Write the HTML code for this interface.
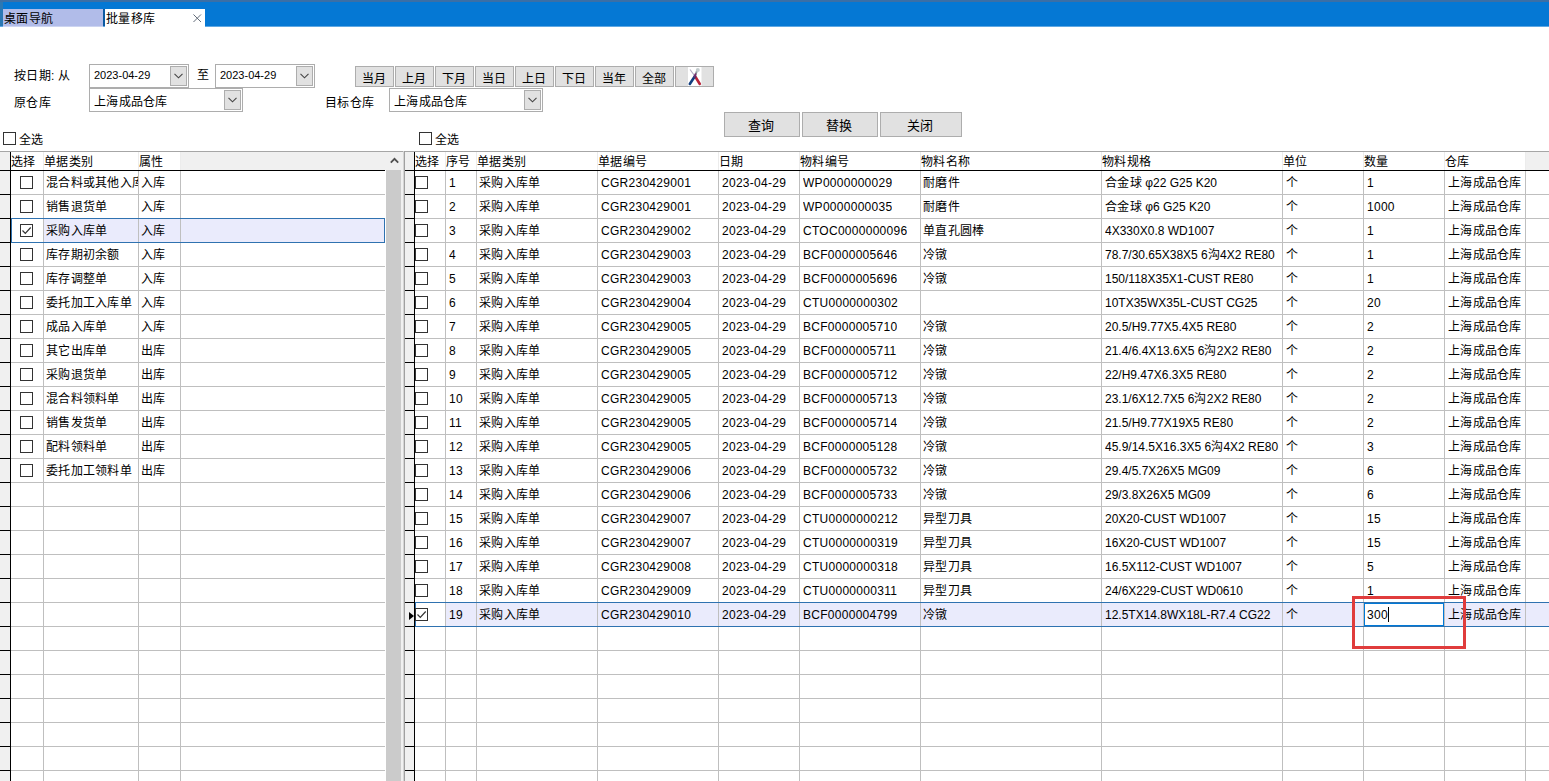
<!DOCTYPE html>
<html lang="zh-CN"><head><meta charset="utf-8"><title>批量移库</title>
<style>
*{box-sizing:border-box;margin:0;padding:0}
html,body{width:1549px;height:781px;overflow:hidden;background:#fff}
body{position:relative;font-family:"Liberation Sans",sans-serif;font-size:12px;color:#000}
.abs,.abs>*{position:absolute}
div{position:absolute;white-space:nowrap}
.a{letter-spacing:.28px}
.c{letter-spacing:.3px}
.n{letter-spacing:0}
.lbl{font-size:12px;line-height:14px;height:14px;letter-spacing:.3px}
.box{border:1px solid #adadad;background:#fff}
.dd{background:#e1e1e1;border:1px solid #adadad}
.btn{background:#e1e1e1;border:1px solid #adadad;text-align:center;font-size:12px}
.cb{width:13px;height:13px;border:1px solid #333;background:#fff}
.hl{background:#bfbfbf;height:1px}
.vl{background:#bfbfbf;width:1px}
.bl{background:#000}
.t{font-size:12px;line-height:25px;height:23px;overflow:hidden;letter-spacing:.28px}
.h{font-size:12px;line-height:20px;height:18px;overflow:hidden;letter-spacing:.3px}
.ind{background:#f0f0f0}
svg{position:absolute;overflow:visible}
</style></head><body>

<div style="left:0;top:0;width:1549px;height:26px;background:#0578d4"></div>
<div style="left:0;top:26px;width:1549px;height:1px;background:#5fa8e3"></div>
<div style="left:0;top:0;width:1549px;height:2px;background:#3b6fa6"></div>
<div style="left:0;top:2px;width:3px;height:24px;background:#2a78b4"></div>
<div style="left:3px;top:9px;width:100px;height:18px;background:linear-gradient(#b1bce9 0,#b1bce9 17px,#ccd4f1 17px);font-size:12px;line-height:20px;padding-left:1px;letter-spacing:.25px;overflow:hidden">桌面导航</div>
<div style="left:105px;top:9px;width:100px;height:18px;background:#fff;font-size:12px;line-height:20px;padding-left:1px;letter-spacing:.25px;overflow:hidden">批量移库</div>
<div style="left:103px;top:9px;width:2px;height:17px;background:#0a5aa2"></div>
<svg style="left:193px;top:13.5px" width="8.5" height="8.5" viewBox="0 0 9 9"><path d="M0.5 0.5L8.5 8.5M8.5 0.5L0.5 8.5" stroke="#5a6472" stroke-width="1" fill="none"/></svg>
<div class="lbl" style="left:14px;top:69px">按日期: 从</div>
<div class="lbl" style="left:14px;top:96px">原仓库</div>
<div class="lbl" style="left:197px;top:68px">至</div>
<div class="lbl" style="left:325px;top:96px">目标仓库</div>
<div class="box" style="left:89px;top:64px;width:100px;height:24px"></div>
<div style="left:94px;top:64px;height:24px;line-height:23px;font-size:11px">2023-04-29</div>
<div class="dd" style="left:170px;top:66px;width:17px;height:20px"></div>
<svg style="left:174px;top:73px" width="9" height="6" viewBox="0 0 9 6"><path d="M0.5 0.8L4.5 4.8L8.5 0.8" stroke="#444" stroke-width="1.1" fill="none"/></svg>
<div class="box" style="left:215px;top:64px;width:100px;height:24px"></div>
<div style="left:220px;top:64px;height:24px;line-height:23px;font-size:11px">2023-04-29</div>
<div class="dd" style="left:296px;top:66px;width:17px;height:20px"></div>
<svg style="left:300px;top:73px" width="9" height="6" viewBox="0 0 9 6"><path d="M0.5 0.8L4.5 4.8L8.5 0.8" stroke="#444" stroke-width="1.1" fill="none"/></svg>
<div class="box" style="left:89px;top:88px;width:154px;height:24px"></div>
<div style="left:94px;top:88px;height:24px;line-height:29px;font-size:12px;letter-spacing:.3px;overflow:hidden">上海成品仓库</div>
<div class="dd" style="left:224px;top:90px;width:17px;height:20px"></div>
<svg style="left:228px;top:97px" width="9" height="6" viewBox="0 0 9 6"><path d="M0.5 0.8L4.5 4.8L8.5 0.8" stroke="#444" stroke-width="1.1" fill="none"/></svg>
<div class="box" style="left:389px;top:88px;width:154px;height:24px"></div>
<div style="left:394px;top:88px;height:24px;line-height:29px;font-size:12px;letter-spacing:.3px;overflow:hidden">上海成品仓库</div>
<div class="dd" style="left:524px;top:90px;width:17px;height:20px"></div>
<svg style="left:528px;top:97px" width="9" height="6" viewBox="0 0 9 6"><path d="M0.5 0.8L4.5 4.8L8.5 0.8" stroke="#444" stroke-width="1.1" fill="none"/></svg>
<div class="btn" style="left:355px;top:66px;width:39px;height:21px;line-height:24px;letter-spacing:.3px;overflow:hidden">当月</div>
<div class="btn" style="left:395px;top:66px;width:39px;height:21px;line-height:24px;letter-spacing:.3px;overflow:hidden">上月</div>
<div class="btn" style="left:435px;top:66px;width:39px;height:21px;line-height:24px;letter-spacing:.3px;overflow:hidden">下月</div>
<div class="btn" style="left:475px;top:66px;width:39px;height:21px;line-height:24px;letter-spacing:.3px;overflow:hidden">当日</div>
<div class="btn" style="left:515px;top:66px;width:39px;height:21px;line-height:24px;letter-spacing:.3px;overflow:hidden">上日</div>
<div class="btn" style="left:555px;top:66px;width:39px;height:21px;line-height:24px;letter-spacing:.3px;overflow:hidden">下日</div>
<div class="btn" style="left:595px;top:66px;width:39px;height:21px;line-height:24px;letter-spacing:.3px;overflow:hidden">当年</div>
<div class="btn" style="left:635px;top:66px;width:39px;height:21px;line-height:24px;letter-spacing:.3px;overflow:hidden">全部</div>
<div class="btn" style="left:675px;top:66px;width:39px;height:21px;line-height:24px;letter-spacing:.3px;overflow:hidden"></div>
<svg style="left:688px;top:67px" width="14" height="19" viewBox="0 0 14 19">
<rect x="0" y="0" width="13.5" height="19" fill="#fff"/>
<path d="M2 2.5L7.5 10" stroke="#b0a8c0" stroke-width="1.1" fill="none"/>
<path d="M7.2 9.5L11.8 17" stroke="#b8243a" stroke-width="2.6" stroke-linecap="round" fill="none"/>
<path d="M9.5 2.5L7.2 8.5" stroke="#8c9aa0" stroke-width="2" fill="none"/>
<circle cx="9.8" cy="3" r="2" fill="#c4ccce"/>
<path d="M7 9L1.8 17" stroke="#123f80" stroke-width="2.6" stroke-linecap="round" fill="none"/>
<path d="M7.8 6.5L6.2 10.5" stroke="#7a2a6a" stroke-width="1.8" fill="none"/>
</svg>
<div class="btn" style="left:724px;top:112px;width:76px;height:25px;line-height:25px;font-size:13px;padding-right:2px">查询</div>
<div class="btn" style="left:802px;top:112px;width:76px;height:25px;line-height:25px;font-size:13px;padding-right:2px">替换</div>
<div class="btn" style="left:880px;top:112px;width:82px;height:25px;line-height:25px;font-size:13px;padding-right:2px">关闭</div>
<div class="cb" style="left:3px;top:132px"></div>
<div class="lbl" style="left:19px;top:133px">全选</div>
<div class="cb" style="left:419px;top:132px"></div>
<div class="lbl" style="left:435px;top:133px">全选</div>
<div style="left:0;top:151px;width:1549px;height:1px;background:#a6a6a6"></div>
<div class="ind" style="left:0;top:152px;width:10px;height:629px"></div>
<div style="left:11px;top:152px;width:170px;height:18px;background:#fff"></div>
<div style="left:181px;top:152px;width:205px;height:18px;background:#f0f0f0"></div>
<div class="h" style="left:11px;top:152px">选择</div>
<div class="h" style="left:44px;top:152px">单据类别</div>
<div class="h" style="left:139px;top:152px">属性</div>
<div style="left:43px;top:152px;width:1px;height:18px;background:#ececec"></div>
<div style="left:138px;top:152px;width:1px;height:18px;background:#ececec"></div>
<div style="left:180px;top:152px;width:1px;height:18px;background:#ececec"></div>
<div class="hl" style="left:11px;top:194px;width:374px"></div>
<div class="bl" style="left:0;top:194px;width:10px;height:1px"></div>
<div class="hl" style="left:11px;top:218px;width:374px"></div>
<div class="bl" style="left:0;top:218px;width:10px;height:1px"></div>
<div class="hl" style="left:11px;top:242px;width:374px"></div>
<div class="bl" style="left:0;top:242px;width:10px;height:1px"></div>
<div class="hl" style="left:11px;top:266px;width:374px"></div>
<div class="bl" style="left:0;top:266px;width:10px;height:1px"></div>
<div class="hl" style="left:11px;top:290px;width:374px"></div>
<div class="bl" style="left:0;top:290px;width:10px;height:1px"></div>
<div class="hl" style="left:11px;top:314px;width:374px"></div>
<div class="bl" style="left:0;top:314px;width:10px;height:1px"></div>
<div class="hl" style="left:11px;top:338px;width:374px"></div>
<div class="bl" style="left:0;top:338px;width:10px;height:1px"></div>
<div class="hl" style="left:11px;top:362px;width:374px"></div>
<div class="bl" style="left:0;top:362px;width:10px;height:1px"></div>
<div class="hl" style="left:11px;top:386px;width:374px"></div>
<div class="bl" style="left:0;top:386px;width:10px;height:1px"></div>
<div class="hl" style="left:11px;top:410px;width:374px"></div>
<div class="bl" style="left:0;top:410px;width:10px;height:1px"></div>
<div class="hl" style="left:11px;top:434px;width:374px"></div>
<div class="bl" style="left:0;top:434px;width:10px;height:1px"></div>
<div class="hl" style="left:11px;top:458px;width:374px"></div>
<div class="bl" style="left:0;top:458px;width:10px;height:1px"></div>
<div class="hl" style="left:11px;top:482px;width:374px"></div>
<div class="bl" style="left:0;top:482px;width:10px;height:1px"></div>
<div class="hl" style="left:11px;top:506px;width:374px"></div>
<div class="bl" style="left:0;top:506px;width:10px;height:1px"></div>
<div class="hl" style="left:11px;top:530px;width:374px"></div>
<div class="bl" style="left:0;top:530px;width:10px;height:1px"></div>
<div class="hl" style="left:11px;top:554px;width:374px"></div>
<div class="bl" style="left:0;top:554px;width:10px;height:1px"></div>
<div class="hl" style="left:11px;top:578px;width:374px"></div>
<div class="bl" style="left:0;top:578px;width:10px;height:1px"></div>
<div class="hl" style="left:11px;top:602px;width:374px"></div>
<div class="bl" style="left:0;top:602px;width:10px;height:1px"></div>
<div class="hl" style="left:11px;top:626px;width:374px"></div>
<div class="bl" style="left:0;top:626px;width:10px;height:1px"></div>
<div class="hl" style="left:11px;top:650px;width:374px"></div>
<div class="bl" style="left:0;top:650px;width:10px;height:1px"></div>
<div class="hl" style="left:11px;top:674px;width:374px"></div>
<div class="bl" style="left:0;top:674px;width:10px;height:1px"></div>
<div class="hl" style="left:11px;top:698px;width:374px"></div>
<div class="bl" style="left:0;top:698px;width:10px;height:1px"></div>
<div class="hl" style="left:11px;top:722px;width:374px"></div>
<div class="bl" style="left:0;top:722px;width:10px;height:1px"></div>
<div class="hl" style="left:11px;top:746px;width:374px"></div>
<div class="bl" style="left:0;top:746px;width:10px;height:1px"></div>
<div class="hl" style="left:11px;top:770px;width:374px"></div>
<div class="bl" style="left:0;top:770px;width:10px;height:1px"></div>
<div class="vl" style="left:43px;top:171px;height:610px"></div>
<div class="vl" style="left:138px;top:171px;height:610px"></div>
<div class="vl" style="left:180px;top:171px;height:610px"></div>
<div style="left:44px;top:219px;width:341px;height:23px;background:#eaebfc"></div>
<div class="vl" style="left:138px;top:219px;height:23px"></div><div class="vl" style="left:180px;top:219px;height:23px"></div>
<div style="left:11px;top:218px;width:374px;height:25px;border:1px solid #2f72b0"></div>
<div class="cb" style="left:20px;top:176px"></div>
<div class="t" style="left:46px;top:171px;width:92px">混合料或其他入库单</div>
<div class="t" style="left:141px;top:171px">入库</div>
<div class="cb" style="left:20px;top:200px"></div>
<div class="t" style="left:46px;top:195px;width:92px">销售退货单</div>
<div class="t" style="left:141px;top:195px">入库</div>
<div class="cb" style="left:20px;top:224px"></div>
<div class="t" style="left:46px;top:219px;width:92px">采购入库单</div>
<div class="t" style="left:141px;top:219px">入库</div>
<div class="cb" style="left:20px;top:248px"></div>
<div class="t" style="left:46px;top:243px;width:92px">库存期初余额</div>
<div class="t" style="left:141px;top:243px">入库</div>
<div class="cb" style="left:20px;top:272px"></div>
<div class="t" style="left:46px;top:267px;width:92px">库存调整单</div>
<div class="t" style="left:141px;top:267px">入库</div>
<div class="cb" style="left:20px;top:296px"></div>
<div class="t" style="left:46px;top:291px;width:92px">委托加工入库单</div>
<div class="t" style="left:141px;top:291px">入库</div>
<div class="cb" style="left:20px;top:320px"></div>
<div class="t" style="left:46px;top:315px;width:92px">成品入库单</div>
<div class="t" style="left:141px;top:315px">入库</div>
<div class="cb" style="left:20px;top:344px"></div>
<div class="t" style="left:46px;top:339px;width:92px">其它出库单</div>
<div class="t" style="left:141px;top:339px">出库</div>
<div class="cb" style="left:20px;top:368px"></div>
<div class="t" style="left:46px;top:363px;width:92px">采购退货单</div>
<div class="t" style="left:141px;top:363px">出库</div>
<div class="cb" style="left:20px;top:392px"></div>
<div class="t" style="left:46px;top:387px;width:92px">混合料领料单</div>
<div class="t" style="left:141px;top:387px">出库</div>
<div class="cb" style="left:20px;top:416px"></div>
<div class="t" style="left:46px;top:411px;width:92px">销售发货单</div>
<div class="t" style="left:141px;top:411px">出库</div>
<div class="cb" style="left:20px;top:440px"></div>
<div class="t" style="left:46px;top:435px;width:92px">配料领料单</div>
<div class="t" style="left:141px;top:435px">出库</div>
<div class="cb" style="left:20px;top:464px"></div>
<div class="t" style="left:46px;top:459px;width:92px">委托加工领料单</div>
<div class="t" style="left:141px;top:459px">出库</div>
<svg style="left:21px;top:225px" width="11" height="11" viewBox="0 0 11 11"><path d="M1.5 5.5L4.3 8.3L9.7 2.5" stroke="#333" stroke-width="1.2" fill="none"/></svg>
<div class="bl" style="left:0;top:170px;width:385px;height:1px"></div>
<div class="bl" style="left:10px;top:152px;width:1px;height:629px"></div>
<div style="left:386px;top:152px;width:17px;height:18px;background:#f0f0f0"></div>
<div style="left:386px;top:170px;width:17px;height:611px;background:#f0f0f0"></div>
<div style="left:386px;top:170px;width:15px;height:611px;background:#cbcbcb"></div>
<svg style="left:390px;top:157px" width="9" height="7" viewBox="0 0 9 7"><path d="M0.8 5.6L4.5 1.8L8.2 5.6" stroke="#505050" stroke-width="1.8" fill="none"/></svg>
<div style="left:403px;top:151px;width:1px;height:630px;background:#d4d4d4"></div>
<div style="left:404px;top:151px;width:1px;height:630px;background:#a0a0a0"></div>
<div class="ind" style="left:405px;top:152px;width:9px;height:629px"></div>
<div style="left:1526px;top:152px;width:23px;height:18px;background:#f0f0f0"></div>
<div class="h" style="left:415px;top:152px">选择</div>
<div class="h" style="left:446px;top:152px">序号</div>
<div class="h" style="left:477px;top:152px">单据类别</div>
<div class="h" style="left:598px;top:152px">单据编号</div>
<div class="h" style="left:719px;top:152px">日期</div>
<div class="h" style="left:800px;top:152px">物料编号</div>
<div class="h" style="left:921px;top:152px">物料名称</div>
<div class="h" style="left:1102px;top:152px">物料规格</div>
<div class="h" style="left:1283px;top:152px">单位</div>
<div class="h" style="left:1364px;top:152px">数量</div>
<div class="h" style="left:1445px;top:152px">仓库</div>
<div style="left:445px;top:152px;width:1px;height:18px;background:#ececec"></div>
<div style="left:476px;top:152px;width:1px;height:18px;background:#ececec"></div>
<div style="left:597px;top:152px;width:1px;height:18px;background:#ececec"></div>
<div style="left:718px;top:152px;width:1px;height:18px;background:#ececec"></div>
<div style="left:799px;top:152px;width:1px;height:18px;background:#ececec"></div>
<div style="left:920px;top:152px;width:1px;height:18px;background:#ececec"></div>
<div style="left:1101px;top:152px;width:1px;height:18px;background:#ececec"></div>
<div style="left:1282px;top:152px;width:1px;height:18px;background:#ececec"></div>
<div style="left:1363px;top:152px;width:1px;height:18px;background:#ececec"></div>
<div style="left:1444px;top:152px;width:1px;height:18px;background:#ececec"></div>
<div style="left:1525px;top:152px;width:1px;height:18px;background:#ececec"></div>
<div class="hl" style="left:415px;top:194px;width:1134px"></div>
<div class="bl" style="left:405px;top:194px;width:9px;height:1px"></div>
<div class="hl" style="left:415px;top:218px;width:1134px"></div>
<div class="bl" style="left:405px;top:218px;width:9px;height:1px"></div>
<div class="hl" style="left:415px;top:242px;width:1134px"></div>
<div class="bl" style="left:405px;top:242px;width:9px;height:1px"></div>
<div class="hl" style="left:415px;top:266px;width:1134px"></div>
<div class="bl" style="left:405px;top:266px;width:9px;height:1px"></div>
<div class="hl" style="left:415px;top:290px;width:1134px"></div>
<div class="bl" style="left:405px;top:290px;width:9px;height:1px"></div>
<div class="hl" style="left:415px;top:314px;width:1134px"></div>
<div class="bl" style="left:405px;top:314px;width:9px;height:1px"></div>
<div class="hl" style="left:415px;top:338px;width:1134px"></div>
<div class="bl" style="left:405px;top:338px;width:9px;height:1px"></div>
<div class="hl" style="left:415px;top:362px;width:1134px"></div>
<div class="bl" style="left:405px;top:362px;width:9px;height:1px"></div>
<div class="hl" style="left:415px;top:386px;width:1134px"></div>
<div class="bl" style="left:405px;top:386px;width:9px;height:1px"></div>
<div class="hl" style="left:415px;top:410px;width:1134px"></div>
<div class="bl" style="left:405px;top:410px;width:9px;height:1px"></div>
<div class="hl" style="left:415px;top:434px;width:1134px"></div>
<div class="bl" style="left:405px;top:434px;width:9px;height:1px"></div>
<div class="hl" style="left:415px;top:458px;width:1134px"></div>
<div class="bl" style="left:405px;top:458px;width:9px;height:1px"></div>
<div class="hl" style="left:415px;top:482px;width:1134px"></div>
<div class="bl" style="left:405px;top:482px;width:9px;height:1px"></div>
<div class="hl" style="left:415px;top:506px;width:1134px"></div>
<div class="bl" style="left:405px;top:506px;width:9px;height:1px"></div>
<div class="hl" style="left:415px;top:530px;width:1134px"></div>
<div class="bl" style="left:405px;top:530px;width:9px;height:1px"></div>
<div class="hl" style="left:415px;top:554px;width:1134px"></div>
<div class="bl" style="left:405px;top:554px;width:9px;height:1px"></div>
<div class="hl" style="left:415px;top:578px;width:1134px"></div>
<div class="bl" style="left:405px;top:578px;width:9px;height:1px"></div>
<div class="hl" style="left:415px;top:602px;width:1134px"></div>
<div class="bl" style="left:405px;top:602px;width:9px;height:1px"></div>
<div class="hl" style="left:415px;top:626px;width:1134px"></div>
<div class="bl" style="left:405px;top:626px;width:9px;height:1px"></div>
<div class="hl" style="left:415px;top:650px;width:1134px"></div>
<div class="bl" style="left:405px;top:650px;width:9px;height:1px"></div>
<div class="hl" style="left:415px;top:674px;width:1134px"></div>
<div class="bl" style="left:405px;top:674px;width:9px;height:1px"></div>
<div class="hl" style="left:415px;top:698px;width:1134px"></div>
<div class="bl" style="left:405px;top:698px;width:9px;height:1px"></div>
<div class="hl" style="left:415px;top:722px;width:1134px"></div>
<div class="bl" style="left:405px;top:722px;width:9px;height:1px"></div>
<div class="hl" style="left:415px;top:746px;width:1134px"></div>
<div class="bl" style="left:405px;top:746px;width:9px;height:1px"></div>
<div class="hl" style="left:415px;top:770px;width:1134px"></div>
<div class="bl" style="left:405px;top:770px;width:9px;height:1px"></div>
<div class="vl" style="left:445px;top:171px;height:610px"></div>
<div class="vl" style="left:476px;top:171px;height:610px"></div>
<div class="vl" style="left:597px;top:171px;height:610px"></div>
<div class="vl" style="left:718px;top:171px;height:610px"></div>
<div class="vl" style="left:799px;top:171px;height:610px"></div>
<div class="vl" style="left:920px;top:171px;height:610px"></div>
<div class="vl" style="left:1101px;top:171px;height:610px"></div>
<div class="vl" style="left:1282px;top:171px;height:610px"></div>
<div class="vl" style="left:1363px;top:171px;height:610px"></div>
<div class="vl" style="left:1444px;top:171px;height:610px"></div>
<div class="vl" style="left:1525px;top:171px;height:610px"></div>
<div style="left:446px;top:603px;width:1103px;height:23px;background:#eaebfc"></div>
<div class="vl" style="left:476px;top:603px;height:23px"></div>
<div class="vl" style="left:597px;top:603px;height:23px"></div>
<div class="vl" style="left:718px;top:603px;height:23px"></div>
<div class="vl" style="left:799px;top:603px;height:23px"></div>
<div class="vl" style="left:920px;top:603px;height:23px"></div>
<div class="vl" style="left:1101px;top:603px;height:23px"></div>
<div class="vl" style="left:1282px;top:603px;height:23px"></div>
<div class="vl" style="left:1363px;top:603px;height:23px"></div>
<div class="vl" style="left:1444px;top:603px;height:23px"></div>
<div class="vl" style="left:1525px;top:603px;height:23px"></div>
<div style="left:415px;top:602px;width:1140px;height:25px;border:1px solid #2f72b0"></div>
<div class="cb" style="left:415px;top:176px"></div>
<div class="t a" style="left:449px;top:171px">1</div>
<div class="t" style="left:479px;top:171px">采购入库单</div>
<div class="t a" style="left:601px;top:171px">CGR230429001</div>
<div class="t a" style="left:722px;top:171px">2023-04-29</div>
<div class="t a" style="left:803px;top:171px">WP0000000029</div>
<div class="t" style="left:923px;top:171px">耐磨件</div>
<div class="t" style="left:1105px;top:171px;width:177px">合金球<span class="n"> φ22 G25 K20</span></div>
<div class="t" style="left:1286px;top:171px">个</div>
<div class="t a" style="left:1367px;top:171px">1</div>
<div class="t" style="left:1448px;top:171px">上海成品仓库</div>
<div class="cb" style="left:415px;top:200px"></div>
<div class="t a" style="left:449px;top:195px">2</div>
<div class="t" style="left:479px;top:195px">采购入库单</div>
<div class="t a" style="left:601px;top:195px">CGR230429001</div>
<div class="t a" style="left:722px;top:195px">2023-04-29</div>
<div class="t a" style="left:803px;top:195px">WP0000000035</div>
<div class="t" style="left:923px;top:195px">耐磨件</div>
<div class="t" style="left:1105px;top:195px;width:177px">合金球<span class="n"> φ6 G25 K20</span></div>
<div class="t" style="left:1286px;top:195px">个</div>
<div class="t a" style="left:1367px;top:195px">1000</div>
<div class="t" style="left:1448px;top:195px">上海成品仓库</div>
<div class="cb" style="left:415px;top:224px"></div>
<div class="t a" style="left:449px;top:219px">3</div>
<div class="t" style="left:479px;top:219px">采购入库单</div>
<div class="t a" style="left:601px;top:219px">CGR230429002</div>
<div class="t a" style="left:722px;top:219px">2023-04-29</div>
<div class="t a" style="left:803px;top:219px">CTOC0000000096</div>
<div class="t" style="left:923px;top:219px">单直孔圆棒</div>
<div class="t" style="left:1105px;top:219px;width:177px"><span class="n">4X330X0.8 WD1007</span></div>
<div class="t" style="left:1286px;top:219px">个</div>
<div class="t a" style="left:1367px;top:219px">1</div>
<div class="t" style="left:1448px;top:219px">上海成品仓库</div>
<div class="cb" style="left:415px;top:248px"></div>
<div class="t a" style="left:449px;top:243px">4</div>
<div class="t" style="left:479px;top:243px">采购入库单</div>
<div class="t a" style="left:601px;top:243px">CGR230429003</div>
<div class="t a" style="left:722px;top:243px">2023-04-29</div>
<div class="t a" style="left:803px;top:243px">BCF0000005646</div>
<div class="t" style="left:923px;top:243px">冷镦</div>
<div class="t" style="left:1105px;top:243px;width:177px"><span class="n">78.7/30.65X38X5 6</span>沟<span class="n">4X2 RE80</span></div>
<div class="t" style="left:1286px;top:243px">个</div>
<div class="t a" style="left:1367px;top:243px">1</div>
<div class="t" style="left:1448px;top:243px">上海成品仓库</div>
<div class="cb" style="left:415px;top:272px"></div>
<div class="t a" style="left:449px;top:267px">5</div>
<div class="t" style="left:479px;top:267px">采购入库单</div>
<div class="t a" style="left:601px;top:267px">CGR230429003</div>
<div class="t a" style="left:722px;top:267px">2023-04-29</div>
<div class="t a" style="left:803px;top:267px">BCF0000005696</div>
<div class="t" style="left:923px;top:267px">冷镦</div>
<div class="t" style="left:1105px;top:267px;width:177px"><span class="n">150/118X35X1-CUST RE80</span></div>
<div class="t" style="left:1286px;top:267px">个</div>
<div class="t a" style="left:1367px;top:267px">1</div>
<div class="t" style="left:1448px;top:267px">上海成品仓库</div>
<div class="cb" style="left:415px;top:296px"></div>
<div class="t a" style="left:449px;top:291px">6</div>
<div class="t" style="left:479px;top:291px">采购入库单</div>
<div class="t a" style="left:601px;top:291px">CGR230429004</div>
<div class="t a" style="left:722px;top:291px">2023-04-29</div>
<div class="t a" style="left:803px;top:291px">CTU0000000302</div>
<div class="t" style="left:1105px;top:291px;width:177px"><span class="n">10TX35WX35L-CUST CG25</span></div>
<div class="t" style="left:1286px;top:291px">个</div>
<div class="t a" style="left:1367px;top:291px">20</div>
<div class="t" style="left:1448px;top:291px">上海成品仓库</div>
<div class="cb" style="left:415px;top:320px"></div>
<div class="t a" style="left:449px;top:315px">7</div>
<div class="t" style="left:479px;top:315px">采购入库单</div>
<div class="t a" style="left:601px;top:315px">CGR230429005</div>
<div class="t a" style="left:722px;top:315px">2023-04-29</div>
<div class="t a" style="left:803px;top:315px">BCF0000005710</div>
<div class="t" style="left:923px;top:315px">冷镦</div>
<div class="t" style="left:1105px;top:315px;width:177px"><span class="n">20.5/H9.77X5.4X5 RE80</span></div>
<div class="t" style="left:1286px;top:315px">个</div>
<div class="t a" style="left:1367px;top:315px">2</div>
<div class="t" style="left:1448px;top:315px">上海成品仓库</div>
<div class="cb" style="left:415px;top:344px"></div>
<div class="t a" style="left:449px;top:339px">8</div>
<div class="t" style="left:479px;top:339px">采购入库单</div>
<div class="t a" style="left:601px;top:339px">CGR230429005</div>
<div class="t a" style="left:722px;top:339px">2023-04-29</div>
<div class="t a" style="left:803px;top:339px">BCF0000005711</div>
<div class="t" style="left:923px;top:339px">冷镦</div>
<div class="t" style="left:1105px;top:339px;width:177px"><span class="n">21.4/6.4X13.6X5 6</span>沟<span class="n">2X2 RE80</span></div>
<div class="t" style="left:1286px;top:339px">个</div>
<div class="t a" style="left:1367px;top:339px">2</div>
<div class="t" style="left:1448px;top:339px">上海成品仓库</div>
<div class="cb" style="left:415px;top:368px"></div>
<div class="t a" style="left:449px;top:363px">9</div>
<div class="t" style="left:479px;top:363px">采购入库单</div>
<div class="t a" style="left:601px;top:363px">CGR230429005</div>
<div class="t a" style="left:722px;top:363px">2023-04-29</div>
<div class="t a" style="left:803px;top:363px">BCF0000005712</div>
<div class="t" style="left:923px;top:363px">冷镦</div>
<div class="t" style="left:1105px;top:363px;width:177px"><span class="n">22/H9.47X6.3X5 RE80</span></div>
<div class="t" style="left:1286px;top:363px">个</div>
<div class="t a" style="left:1367px;top:363px">2</div>
<div class="t" style="left:1448px;top:363px">上海成品仓库</div>
<div class="cb" style="left:415px;top:392px"></div>
<div class="t a" style="left:449px;top:387px">10</div>
<div class="t" style="left:479px;top:387px">采购入库单</div>
<div class="t a" style="left:601px;top:387px">CGR230429005</div>
<div class="t a" style="left:722px;top:387px">2023-04-29</div>
<div class="t a" style="left:803px;top:387px">BCF0000005713</div>
<div class="t" style="left:923px;top:387px">冷镦</div>
<div class="t" style="left:1105px;top:387px;width:177px"><span class="n">23.1/6X12.7X5 6</span>沟<span class="n">2X2 RE80</span></div>
<div class="t" style="left:1286px;top:387px">个</div>
<div class="t a" style="left:1367px;top:387px">2</div>
<div class="t" style="left:1448px;top:387px">上海成品仓库</div>
<div class="cb" style="left:415px;top:416px"></div>
<div class="t a" style="left:449px;top:411px">11</div>
<div class="t" style="left:479px;top:411px">采购入库单</div>
<div class="t a" style="left:601px;top:411px">CGR230429005</div>
<div class="t a" style="left:722px;top:411px">2023-04-29</div>
<div class="t a" style="left:803px;top:411px">BCF0000005714</div>
<div class="t" style="left:923px;top:411px">冷镦</div>
<div class="t" style="left:1105px;top:411px;width:177px"><span class="n">21.5/H9.77X19X5 RE80</span></div>
<div class="t" style="left:1286px;top:411px">个</div>
<div class="t a" style="left:1367px;top:411px">2</div>
<div class="t" style="left:1448px;top:411px">上海成品仓库</div>
<div class="cb" style="left:415px;top:440px"></div>
<div class="t a" style="left:449px;top:435px">12</div>
<div class="t" style="left:479px;top:435px">采购入库单</div>
<div class="t a" style="left:601px;top:435px">CGR230429005</div>
<div class="t a" style="left:722px;top:435px">2023-04-29</div>
<div class="t a" style="left:803px;top:435px">BCF0000005128</div>
<div class="t" style="left:923px;top:435px">冷镦</div>
<div class="t" style="left:1105px;top:435px;width:177px"><span class="n">45.9/14.5X16.3X5 6</span>沟<span class="n">4X2 RE80</span></div>
<div class="t" style="left:1286px;top:435px">个</div>
<div class="t a" style="left:1367px;top:435px">3</div>
<div class="t" style="left:1448px;top:435px">上海成品仓库</div>
<div class="cb" style="left:415px;top:464px"></div>
<div class="t a" style="left:449px;top:459px">13</div>
<div class="t" style="left:479px;top:459px">采购入库单</div>
<div class="t a" style="left:601px;top:459px">CGR230429006</div>
<div class="t a" style="left:722px;top:459px">2023-04-29</div>
<div class="t a" style="left:803px;top:459px">BCF0000005732</div>
<div class="t" style="left:923px;top:459px">冷镦</div>
<div class="t" style="left:1105px;top:459px;width:177px"><span class="n">29.4/5.7X26X5 MG09</span></div>
<div class="t" style="left:1286px;top:459px">个</div>
<div class="t a" style="left:1367px;top:459px">6</div>
<div class="t" style="left:1448px;top:459px">上海成品仓库</div>
<div class="cb" style="left:415px;top:488px"></div>
<div class="t a" style="left:449px;top:483px">14</div>
<div class="t" style="left:479px;top:483px">采购入库单</div>
<div class="t a" style="left:601px;top:483px">CGR230429006</div>
<div class="t a" style="left:722px;top:483px">2023-04-29</div>
<div class="t a" style="left:803px;top:483px">BCF0000005733</div>
<div class="t" style="left:923px;top:483px">冷镦</div>
<div class="t" style="left:1105px;top:483px;width:177px"><span class="n">29/3.8X26X5 MG09</span></div>
<div class="t" style="left:1286px;top:483px">个</div>
<div class="t a" style="left:1367px;top:483px">6</div>
<div class="t" style="left:1448px;top:483px">上海成品仓库</div>
<div class="cb" style="left:415px;top:512px"></div>
<div class="t a" style="left:449px;top:507px">15</div>
<div class="t" style="left:479px;top:507px">采购入库单</div>
<div class="t a" style="left:601px;top:507px">CGR230429007</div>
<div class="t a" style="left:722px;top:507px">2023-04-29</div>
<div class="t a" style="left:803px;top:507px">CTU0000000212</div>
<div class="t" style="left:923px;top:507px">异型刀具</div>
<div class="t" style="left:1105px;top:507px;width:177px"><span class="n">20X20-CUST WD1007</span></div>
<div class="t" style="left:1286px;top:507px">个</div>
<div class="t a" style="left:1367px;top:507px">15</div>
<div class="t" style="left:1448px;top:507px">上海成品仓库</div>
<div class="cb" style="left:415px;top:536px"></div>
<div class="t a" style="left:449px;top:531px">16</div>
<div class="t" style="left:479px;top:531px">采购入库单</div>
<div class="t a" style="left:601px;top:531px">CGR230429007</div>
<div class="t a" style="left:722px;top:531px">2023-04-29</div>
<div class="t a" style="left:803px;top:531px">CTU0000000319</div>
<div class="t" style="left:923px;top:531px">异型刀具</div>
<div class="t" style="left:1105px;top:531px;width:177px"><span class="n">16X20-CUST WD1007</span></div>
<div class="t" style="left:1286px;top:531px">个</div>
<div class="t a" style="left:1367px;top:531px">15</div>
<div class="t" style="left:1448px;top:531px">上海成品仓库</div>
<div class="cb" style="left:415px;top:560px"></div>
<div class="t a" style="left:449px;top:555px">17</div>
<div class="t" style="left:479px;top:555px">采购入库单</div>
<div class="t a" style="left:601px;top:555px">CGR230429008</div>
<div class="t a" style="left:722px;top:555px">2023-04-29</div>
<div class="t a" style="left:803px;top:555px">CTU0000000318</div>
<div class="t" style="left:923px;top:555px">异型刀具</div>
<div class="t" style="left:1105px;top:555px;width:177px"><span class="n">16.5X112-CUST WD1007</span></div>
<div class="t" style="left:1286px;top:555px">个</div>
<div class="t a" style="left:1367px;top:555px">5</div>
<div class="t" style="left:1448px;top:555px">上海成品仓库</div>
<div class="cb" style="left:415px;top:584px"></div>
<div class="t a" style="left:449px;top:579px">18</div>
<div class="t" style="left:479px;top:579px">采购入库单</div>
<div class="t a" style="left:601px;top:579px">CGR230429009</div>
<div class="t a" style="left:722px;top:579px">2023-04-29</div>
<div class="t a" style="left:803px;top:579px">CTU0000000311</div>
<div class="t" style="left:923px;top:579px">异型刀具</div>
<div class="t" style="left:1105px;top:579px;width:177px"><span class="n">24/6X229-CUST WD0610</span></div>
<div class="t" style="left:1286px;top:579px">个</div>
<div class="t a" style="left:1367px;top:579px">1</div>
<div class="t" style="left:1448px;top:579px">上海成品仓库</div>
<div class="cb" style="left:415px;top:608px"></div>
<div class="t a" style="left:449px;top:603px">19</div>
<div class="t" style="left:479px;top:603px">采购入库单</div>
<div class="t a" style="left:601px;top:603px">CGR230429010</div>
<div class="t a" style="left:722px;top:603px">2023-04-29</div>
<div class="t a" style="left:803px;top:603px">BCF0000004799</div>
<div class="t" style="left:923px;top:603px">冷镦</div>
<div class="t" style="left:1105px;top:603px;width:177px"><span class="n">12.5TX14.8WX18L-R7.4 CG22</span></div>
<div class="t" style="left:1286px;top:603px">个</div>
<div class="t" style="left:1448px;top:603px">上海成品仓库</div>
<svg style="left:416px;top:609px" width="11" height="11" viewBox="0 0 11 11"><path d="M1.5 5.5L4.3 8.3L9.7 2.5" stroke="#333" stroke-width="1.2" fill="none"/></svg>
<div style="left:1364px;top:603px;width:80px;height:23px;background:#fff;border:1px solid #0078d7"></div>
<div class="t a" style="left:1367px;top:603px">300</div>
<div class="bl" style="left:1388px;top:607px;width:1px;height:15px"></div>
<svg style="left:409px;top:612px" width="5" height="8" viewBox="0 0 5 8"><path d="M0 0L5 4L0 8Z" fill="#000"/></svg>
<div class="bl" style="left:405px;top:170px;width:1144px;height:1px"></div>
<div class="bl" style="left:414px;top:152px;width:1px;height:629px"></div>
<div style="left:1352px;top:596px;width:114px;height:53px;border:3px solid #e03c3c"></div>
</body></html>
